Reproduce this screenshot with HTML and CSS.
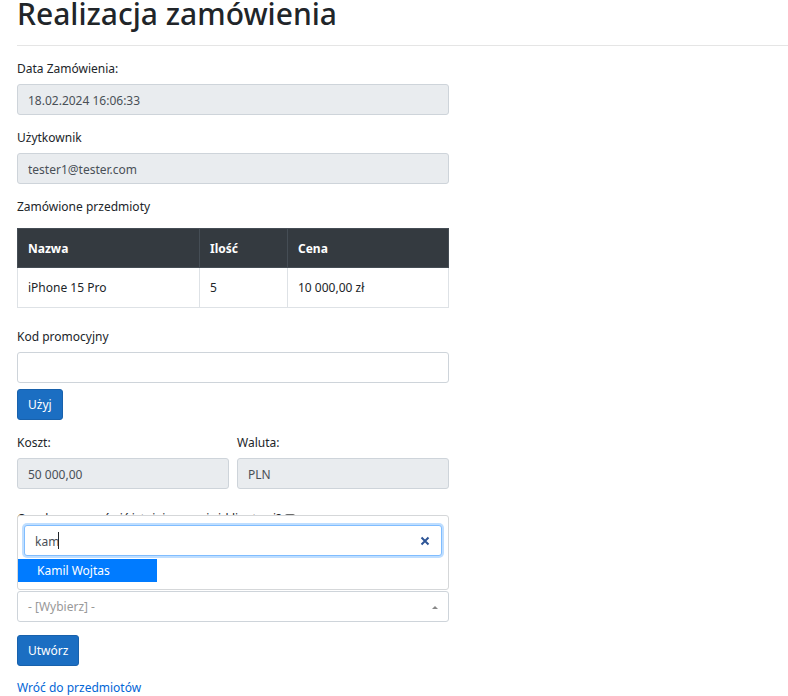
FILE: index.html
```html
<!DOCTYPE html>
<html lang="pl">
<head>
<meta charset="utf-8">
<meta name="viewport" content="width=device-width, initial-scale=1">
<title>Realizacja zamówienia</title>
<link rel="stylesheet" href="styles.css">
</head>
<body>
<main class="page">
  <h1 class="title">Realizacja zamówienia</h1>
  <form class="form">
    <div class="field">
      <label for="date">Data Zamówienia:</label>
      <input class="control" id="date" type="text" value="18.02.2024 16:06:33" readonly>
    </div>
    <div class="field">
      <label for="user">Użytkownik</label>
      <input class="control" id="user" type="text" value="tester1@tester.com" readonly>
    </div>
    <div class="field items">
      <p class="caption" id="items-caption">Zamówione przedmioty</p>
      <table class="table" aria-labelledby="items-caption">
        <thead><tr><th class="col-name">Nazwa</th><th class="col-count">Ilość</th><th>Cena</th></tr></thead>
        <tbody><tr><td>iPhone 15 Pro</td><td>5</td><td>10 000,00 zł</td></tr></tbody>
      </table>
    </div>
    <div class="field promo">
      <label for="promo">Kod promocyjny</label>
      <input class="control" id="promo" type="text">
      <button class="button" type="button">Użyj</button>
    </div>
    <div class="row">
      <div class="field">
        <label for="cost">Koszt:</label>
        <input class="control" id="cost" type="text" value="50 000,00" readonly>
      </div>
      <div class="field">
        <label for="currency">Waluta:</label>
        <input class="control" id="currency" type="text" value="PLN" readonly>
      </div>
    </div>
    <div class="customer">
      <div class="question">
        <label for="existing">Czy chcesz zamówić istniejącemu już klientowi?</label>
        <input class="check" id="existing" type="checkbox" checked>
      </div>
      <div class="picker">
        <div class="menu">
          <div class="search">
            <input class="control search-input" type="text" value="kam" aria-label="Szukaj klienta">
            <span class="caret"></span>
            <button class="clear" type="button" aria-label="Wyczyść">
              <svg viewBox="0 0 10 10" width="10" height="10"><path d="M1.5 1.5 8.5 8.5M8.5 1.5 1.5 8.5" fill="none" stroke="#2d5596" stroke-width="2"/></svg>
            </button>
          </div>
          <button class="option" type="button">Kamil Wojtas</button>
        </div>
        <button class="control toggle" type="button">- [Wybierz] -
          <svg viewBox="0 0 6 3" width="6" height="3"><path d="M0 3 3 0 6 3Z" fill="#888"/></svg>
        </button>
      </div>
    </div>
    <button class="button" type="submit">Utwórz</button>
  </form>
  <a class="back" href="#">Wróć do przedmiotów</a>
</main>
</body>
</html>
```

FILE: styles.css
```css
* {
  box-sizing: border-box;
}

body {
  margin: 0;
  background: #fff;
  color: #212529;
  font: 12px/20px "Noto Sans", "Open Sans", sans-serif;
}

.page {
  padding-left: 17px;
}

.title {
  margin: 0 0 13px;
  padding-bottom: 17px;
  border-bottom: 1px solid #e5e5e5;
  font-size: 30px;
  font-weight: 500;
  line-height: 28px;
}

.form {
  max-width: 432px;
}

.field {
  margin-bottom: 13px;
}

label {
  display: block;
  margin-bottom: 5px;
}

.caption {
  margin: 0 0 11px;
}

.control {
  display: block;
  width: 100%;
  height: 31px;
  padding: 1px 10px 0;
  border: 1px solid #ced4da;
  border-radius: 3px;
  background: #fff;
  color: #495057;
  font: inherit;
}

.control[readonly] {
  background: #e9ecef;
}

.table {
  width: 100%;
  border-collapse: collapse;
  table-layout: fixed;
}

.table th,
.table td {
  height: 40px;
  padding: 1px 10px 0;
  border: 1px solid #dee2e6;
  text-align: left;
}

.table th {
  height: 39px;
  border-color: #454d55;
  background: #343a40;
  color: #fff;
}

.table .col-name {
  width: 182px;
}

.table .col-count {
  width: 88px;
}

.items {
  margin-bottom: 19px;
}

.button {
  height: 31px;
  padding: 0 10px;
  border: 1px solid #1861ac;
  border-radius: 3px;
  background: #1b6ec2;
  color: #fff;
  font: inherit;
}

.promo .button {
  display: block;
  margin-top: 6px;
}

.row {
  display: grid;
  grid-template-columns: 1fr 1fr;
  gap: 8px;
}

.customer {
  margin-bottom: 13px;
}

.question {
  display: flex;
  align-items: center;
  gap: 4px;
  margin: 7px 0 62px;
}

.question label {
  margin: 0;
}

.check {
  width: 10px;
  height: 10px;
  margin: 0;
  accent-color: #6b6b6b;
}

.picker {
  position: relative;
}

.menu {
  position: absolute;
  bottom: 100%;
  left: 0;
  width: 100%;
  height: 75px;
  margin-bottom: 1px;
  padding-top: 9px;
  border: 1px solid #d5d7d9;
  border-radius: 3px;
  background: #fff;
}

.search {
  position: relative;
  margin: 0 6px 3px;
}

.search-input {
  border-color: #80bdff;
  box-shadow: 0 0 0 2px #bfdeff;
}

.caret {
  position: absolute;
  top: 7px;
  left: 34px;
  width: 1px;
  height: 17px;
  background: #212529;
}

.clear {
  display: flex;
  position: absolute;
  top: 11px;
  right: 12px;
  padding: 0;
  border: 0;
  background: none;
}

.option {
  display: block;
  width: 139px;
  height: 23px;
  padding: 0 19px;
  border: 0;
  background: #007bff;
  color: #fff;
  font: inherit;
  text-align: left;
}

.toggle {
  display: flex;
  align-items: center;
  justify-content: space-between;
  color: #999;
}

.back {
  display: block;
  margin-top: 14px;
  line-height: 16px;
  color: #0366d6;
  text-decoration: none;
}
```
